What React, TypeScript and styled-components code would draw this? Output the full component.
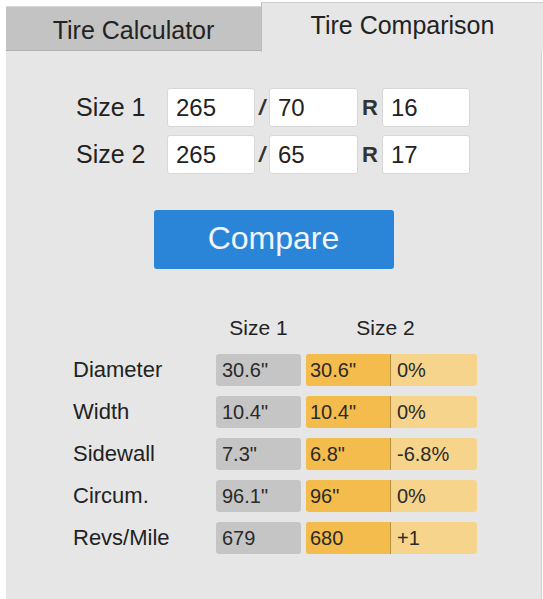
import React from "react";
import styled, { createGlobalStyle } from "styled-components";

const Global = createGlobalStyle`
  html, body { margin: 0; padding: 0; background: #ffffff; }
  body { font-family: "Liberation Sans", Arial, sans-serif; color: #222; }
`;

const Page = styled.div`
  width: 543px;
  height: 599px;
  overflow: hidden;
`;

const TabBar = styled.div`
  display: flex;
  align-items: flex-end;
  height: 51px;
  padding-left: 6px;
`;

const Tab = styled.div<{ $active?: boolean }>`
  box-sizing: border-box;
  display: flex;
  align-items: center;
  justify-content: center;
  font-size: 25px;
  color: #222;
  ${(p) =>
    p.$active
      ? `
    width: 282px;
    height: 50px;
    margin-bottom: -1px;
    background: #e6e6e6;
    border-top: 1px solid #cfcfcf;
    border-left: 1px solid #bdbdbd;
    padding-bottom: 5px;
  `
      : `
    width: 255px;
    height: 45px;
    background: #c3c3c3;
    border-top: 1px solid #d6d6d6;
    border-bottom: 1px solid #b0b0b0;
    padding-top: 3px;
  `}
`;

const Panel = styled.div`
  margin-left: 6px;
  width: 535px;
  height: 548px;
  background: #e6e6e6;
  border-right: 1px solid #d0d0d0;
  display: flex;
  flex-direction: column;
  align-items: center;
`;

const Form = styled.div`
  align-self: flex-start;
  margin-top: 37px;
  margin-left: 70px;
  display: flex;
  flex-direction: column;
  gap: 8px;
`;

const SizeRow = styled.div`
  display: flex;
  align-items: center;
`;

const SizeLabel = styled.div`
  width: 91px;
  font-size: 25px;
`;

const Field = styled.div<{ $w: number }>`
  box-sizing: border-box;
  width: ${(p) => p.$w}px;
  height: 39px;
  background: #fff;
  border: 1px solid #d8d8d8;
  border-radius: 3px;
  font-size: 24px;
  display: flex;
  align-items: center;
  padding-left: 8px;
`;

const Sep = styled.div<{ $w: number; $bold?: boolean }>`
  width: ${(p) => p.$w}px;
  text-align: center;
  font-size: 22px;
  font-weight: bold;
  font-style: ${(p) => (p.$bold ? "normal" : "italic")};
  color: #333;
`;

const CompareButton = styled.button`
  margin-top: 36px;
  width: 240px;
  height: 59px;
  border: none;
  border-radius: 3px;
  background: #2a85d8;
  color: #f2f6fb;
  font-family: "Liberation Sans", Arial, sans-serif;
  font-size: 32px;
  padding: 0 0 2px;
`;

const Table = styled.div`
  align-self: flex-start;
  margin-left: 67px;
  margin-top: 43px;
  display: flex;
  flex-direction: column;
  gap: 10px;
`;

const Row = styled.div`
  display: flex;
  align-items: center;
  height: 32px;
`;

const HeadSpacer = styled.div`
  width: 143px;
`;

const Head = styled.div<{ $w: number; $pad?: number }>`
  width: ${(p) => p.$w}px;
  padding-right: ${(p) => p.$pad ?? 0}px;
  box-sizing: border-box;
  text-align: center;
  font-size: 21px;
`;

const RowLabel = styled.div`
  width: 143px;
  font-size: 22px;
`;

const Cell = styled.div<{ $kind: "gray" | "orange" | "light" }>`
  box-sizing: border-box;
  height: 32px;
  display: flex;
  align-items: center;
  font-size: 20px;
  color: #2a2a2a;
  ${(p) =>
    p.$kind === "gray"
      ? `width: 85px; margin-right: 5px; background: #c5c5c5; border-radius: 3px; padding-left: 6px;`
      : p.$kind === "orange"
      ? `width: 85px; background: #f4bc4c; border-radius: 3px 0 0 3px; padding-left: 4px; border-right: 1px solid #b8913e;`
      : `width: 86px; background: #f7d48b; border-radius: 0 3px 3px 0; padding-left: 6px;`}
`;

const rows = [
  ["Diameter", '30.6"', '30.6"', "0%"],
  ["Width", '10.4"', '10.4"', "0%"],
  ["Sidewall", '7.3"', '6.8"', "-6.8%"],
  ["Circum.", '96.1"', '96"', "0%"],
  ["Revs/Mile", "679", "680", "+1"],
];

const sizes = [
  ["Size 1", "265", "70", "16"],
  ["Size 2", "265", "65", "17"],
];

export default function App() {
  return (
    <Page>
      <Global />
      <TabBar>
        <Tab>Tire Calculator</Tab>
        <Tab $active>Tire Comparison</Tab>
      </TabBar>
      <Panel>
        <Form>
          {sizes.map(([l, w, a, r]) => (
            <SizeRow key={l}>
              <SizeLabel>{l}</SizeLabel>
              <Field $w={88}>{w}</Field>
              <Sep $w={14}>/</Sep>
              <Field $w={89}>{a}</Field>
              <Sep $w={24} $bold>R</Sep>
              <Field $w={88}>{r}</Field>
            </SizeRow>
          ))}
        </Form>
        <CompareButton>Compare</CompareButton>
        <Table>
          <Row>
            <HeadSpacer />
            <Head $w={90} $pad={5}>Size 1</Head>
            <Head $w={171} $pad={12}>Size 2</Head>
          </Row>
          {rows.map(([l, a, b, c]) => (
            <Row key={l}>
              <RowLabel>{l}</RowLabel>
              <Cell $kind="gray">{a}</Cell>
              <Cell $kind="orange">{b}</Cell>
              <Cell $kind="light">{c}</Cell>
            </Row>
          ))}
        </Table>
      </Panel>
    </Page>
  );
}
